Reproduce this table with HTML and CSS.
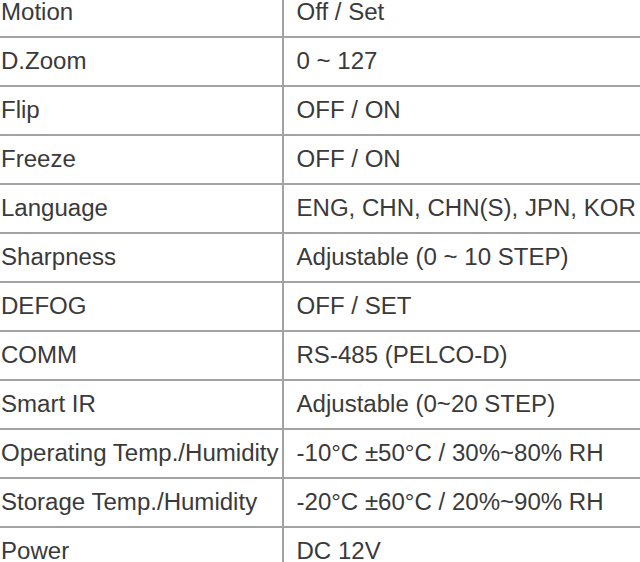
FILE: index.html
```html
<!DOCTYPE html>
<html>
<head>
<meta charset="utf-8">
<link rel="stylesheet" href="styles.css">
</head>
<body>
<div class="spec">
  <div class="row"><div class="key">Motion</div><div class="val">Off / Set</div></div>
  <div class="row"><div class="key">D.Zoom</div><div class="val">0 ~ 127</div></div>
  <div class="row"><div class="key">Flip</div><div class="val">OFF / ON</div></div>
  <div class="row"><div class="key">Freeze</div><div class="val">OFF / ON</div></div>
  <div class="row"><div class="key">Language</div><div class="val">ENG, CHN, CHN(S), JPN, KOR</div></div>
  <div class="row"><div class="key">Sharpness</div><div class="val">Adjustable (0 ~ 10 STEP)</div></div>
  <div class="row"><div class="key">DEFOG</div><div class="val">OFF / SET</div></div>
  <div class="row"><div class="key">COMM</div><div class="val">RS-485 (PELCO-D)</div></div>
  <div class="row"><div class="key">Smart IR</div><div class="val">Adjustable (0~20 STEP)</div></div>
  <div class="row"><div class="key">Operating Temp./Humidity</div><div class="val">-10°C ±50°C / 30%~80% RH</div></div>
  <div class="row"><div class="key">Storage Temp./Humidity</div><div class="val">-20°C ±60°C / 20%~90% RH</div></div>
  <div class="row"><div class="key">Power</div><div class="val">DC 12V</div></div>
</div>
</body>
</html>
```
FILE: styles.css
```css
html, body {
  margin: 0;
  padding: 0;
  background: #ffffff;
  overflow: hidden;
}
body {
  font-family: "Liberation Sans", Arial, sans-serif;
  font-size: 24.05px;
  color: #3a3a3a;
}
.spec {
  margin: -11px 0 0 -11px;
  width: 700px;
}
.row {
  display: grid;
  grid-template-columns: 295px 1fr;
  height: 47px;
  border-bottom: 2px solid #a3a3a3;
}
.key, .val {
  display: flex;
  align-items: center;
  white-space: nowrap;
  padding-bottom: 2px;
  box-sizing: border-box;
}
.key {
  padding-left: 12px;
  border-right: 2px solid #a3a3a3;
}
.val {
  padding-left: 12.5px;
}
```
